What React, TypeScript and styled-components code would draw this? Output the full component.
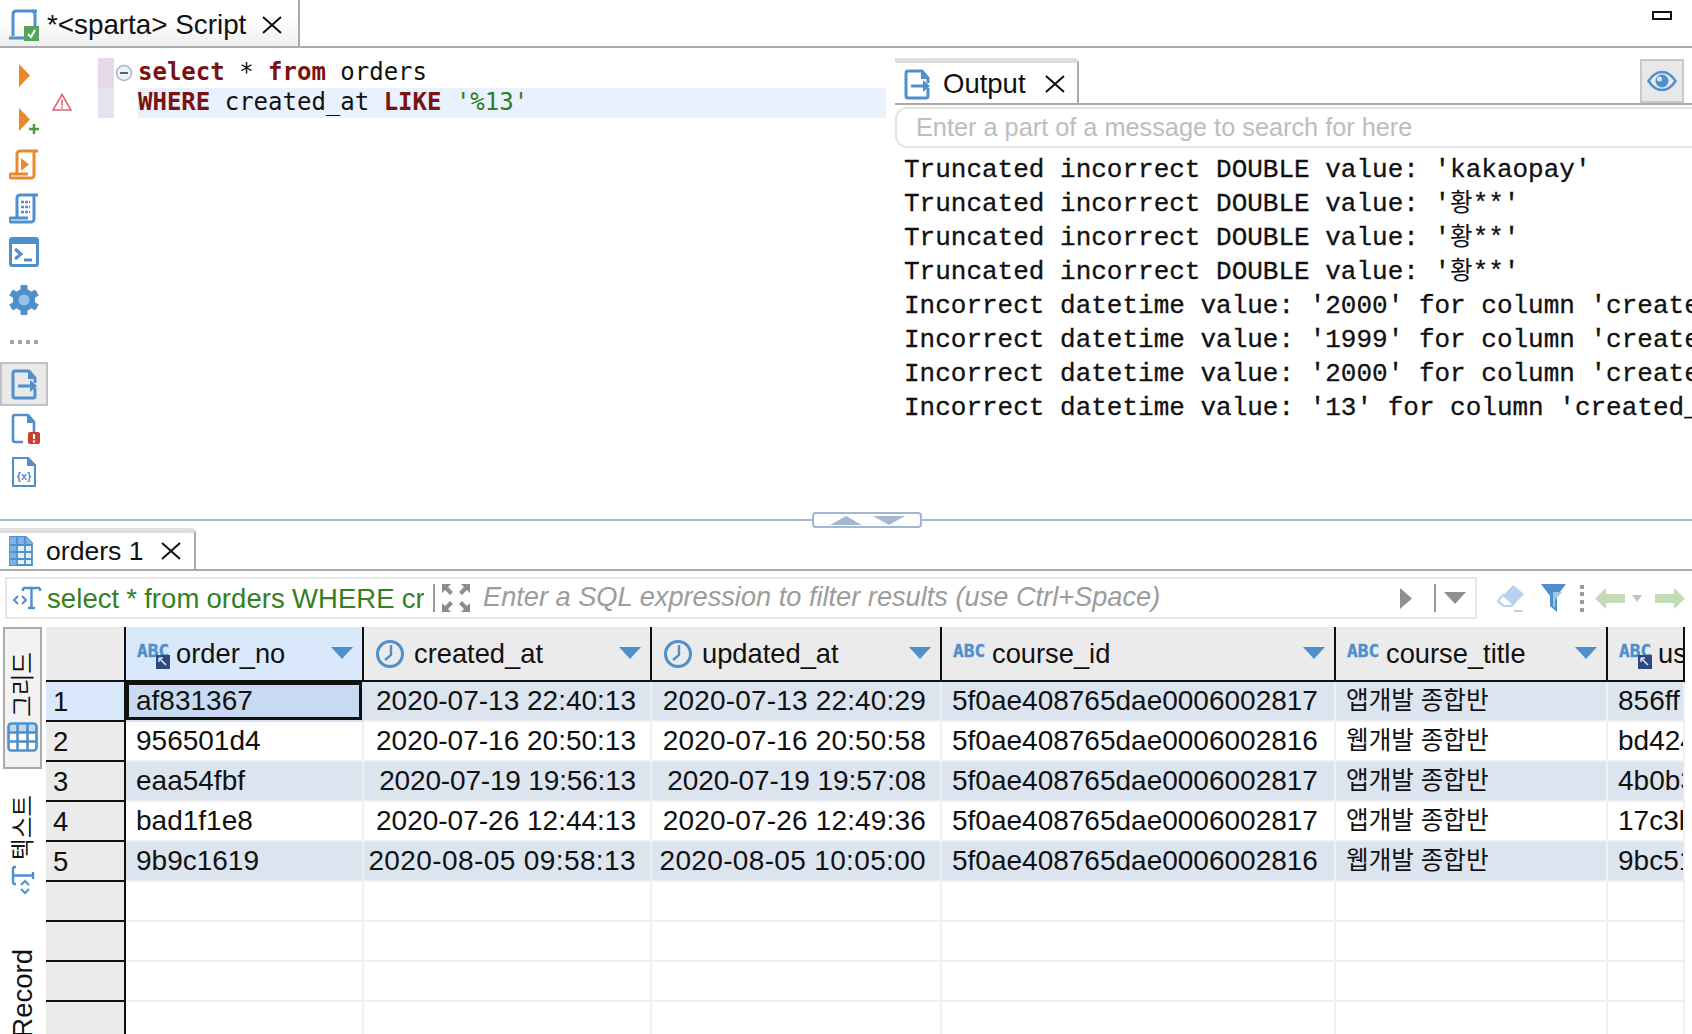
import React from "react";
import styled, { createGlobalStyle } from "styled-components";

const BLUE = "#4f8fcc";
const SANS = `"Liberation Sans", Arial, sans-serif`;
const KO = `"Liberation Sans", "Noto Sans CJK KR", sans-serif`;
const HAIR = "#aaaaaa";

const Global = createGlobalStyle`
  html, body { margin: 0; padding: 0; background: #fff; overflow: hidden; }
  #root { width: 1692px; height: 1034px; overflow: hidden; }
`;

const Page = styled.div`
  width: 1692px; height: 1034px; overflow: hidden; display: flex; flex-direction: column;
  font-family: ${SANS}; color: #111; background: #fff;
`;

/* top tab bar */
const TopBar = styled.div`
  height: 48px; box-sizing: border-box; flex: none; display: flex; align-items: stretch; justify-content: space-between;
  border-bottom: 2px solid ${HAIR};
`;
const ScriptTab = styled.div`
  width: 300px; box-sizing: border-box; display: flex; align-items: center; padding: 3px 16px 0 8px;
  border-right: 2px solid ${HAIR};
  background: linear-gradient(#ffffff 40%, #efefef);
`;
const TabLabel = styled.span<{ $left: number; $size?: number }>`
  font-size: ${(p) => p.$size ?? 27.5}px; margin-left: ${(p) => p.$left}px; white-space: nowrap; flex: 1;
`;
const MinButton = styled.div`
  width: 20px; height: 9px; box-sizing: border-box; border: 2px solid #111; margin: 11px 20px 0 0;
`;

/* main */
const Main = styled.div`
  height: 464px; flex: none; display: flex;
`;
const ToolColumn = styled.div`
  width: 48px; flex: none; display: flex; flex-direction: column; padding-top: 1px;
`;
const Tool = styled.div<{ $h: number; $active?: boolean }>`
  height: ${(p) => p.$h}px; box-sizing: border-box; display: flex; align-items: center; justify-content: center;
  ${(p) => p.$active && `background:#e9e9e9;border:2px solid #c2c2c2;`}
`;
const Editor = styled.div`
  width: 838px; flex: none; padding-top: 10px;
`;
const CodeRow = styled.div`
  display: flex; height: 30px;
`;
const RulerCell = styled.div`
  width: 50px; flex: none; display: flex; align-items: center; justify-content: center;
`;
const MarkCell = styled.div<{ $color: string }>`
  width: 16px; flex: none; background: ${(p) => p.$color};
`;
const FoldCell = styled.div`
  width: 24px; flex: none; display: flex; align-items: center; padding-left: 1px; box-sizing: border-box;
`;
const Code = styled.div<{ $current?: boolean }>`
  flex: 1; font: 24px/28px "DejaVu Sans Mono", monospace; white-space: pre; color: #111;
  background: ${(p) => (p.$current ? "#e8f1fd" : "transparent")};
`;
const Kw = styled.span`
  color: #7a1212; font-weight: 700;
`;
const Str = styled.span`
  color: #2f7d22;
`;

const OutputPane = styled.div`
  flex: 1; min-width: 0; padding: 10px 0 0 9px; display: flex; flex-direction: column;
`;
const OutHead = styled.div`
  height: 47px; flex: none; display: flex; justify-content: space-between; box-sizing: border-box;
  border-bottom: 2px solid ${HAIR};
`;
const OutTab = styled.div`
  width: 184px; height: 47px; box-sizing: border-box; display: flex; align-items: center; padding: 0 12px 0 9px; flex: none;
  border-right: 2px solid ${HAIR}; border-top: 5px solid #dedede; border-top-right-radius: 5px;
`;
const EyeButton = styled.div`
  width: 44px; height: 44px; margin: 1px 8px 0 0; box-sizing: border-box; background: #e8e8e8;
  border: 2px solid #c8c8c8; display: flex; align-items: center; justify-content: center;
`;
const OutSearch = styled.div`
  height: 41px; flex: none; margin-top: 2px; box-sizing: border-box; border: 2px solid #e4e4e4; border-right: 0;
  border-radius: 12px 0 0 12px; display: flex; align-items: center; padding-left: 19px;
  font-size: 25.3px; color: #bdbdbd; white-space: nowrap; overflow: hidden;
`;
const OutLines = styled.div`
  padding: 5px 0 0 9px; font: 26px/34px "Liberation Mono", "Courier New", monospace; color: #111;
  white-space: pre; overflow: hidden; -webkit-text-stroke: 0.3px #111;
`;
const OutLine = styled.div`
  height: 34px;
`;
const OutKo = styled.span`
  font-family: "Noto Sans CJK KR", sans-serif; font-size: 24.5px; line-height: 1; -webkit-text-stroke: 0;
`;

/* sash */
const Sash = styled.div`
  height: 16px; flex: none; display: flex; align-items: center;
`;
const SashLine = styled.div<{ $w?: number }>`
  height: 2px; background: #a3b7d3;
  ${(p) => (p.$w ? `width:${p.$w}px;flex:none;` : `flex:1;`)}
`;
const SashGrip = styled.div`
  width: 110px; height: 16px; box-sizing: border-box; border: 2px solid #a3b7d3; border-radius: 4px; flex: none;
  display: flex; align-items: center; justify-content: center; gap: 11px;
`;

/* results */
const ResultTabs = styled.div`
  height: 43px; flex: none; box-sizing: border-box; border-bottom: 2px solid ${HAIR};
`;
const ResultTab = styled.div`
  width: 196px; height: 43px; box-sizing: border-box; border-top: 5px solid #dedede; border-right: 2px solid ${HAIR};
  border-top-right-radius: 5px; display: flex; align-items: center; padding: 0 0 2px 9px;
`;
const FilterRow = styled.div`
  height: 42px; flex: none; margin: 6px 0 8px 5px; display: flex; align-items: center;
`;
const FilterBox = styled.div`
  width: 1472px; height: 42px; flex: none; box-sizing: border-box; border: 2px solid #e6e6e6; display: flex; align-items: center; padding-left: 5px;
`;
const QueryText = styled.div`
  width: 377px; margin-left: 5px; flex: none; overflow: hidden; white-space: nowrap; font-size: 27.5px; color: #35801f;
  word-spacing: -0.7px; letter-spacing: 0.08px; padding-top: 2px;
`;
const VBar = styled.div`
  width: 2px; height: 28px; background: #999; flex: none;
`;
const FilterHint = styled.div`
  flex: 1; font-style: italic; font-size: 27.2px; color: #9c9c9c; white-space: nowrap; margin-left: 12px; margin-bottom: 2px;
`;
const FilterActions = styled.div`
  display: flex; align-items: center; margin-left: 18px;
`;
const Spacer = styled.span<{ $w: number }>`
  width: ${(p) => p.$w}px; flex: none; display: inline-block;
`;

const Content = styled.div`
  flex: 1; min-height: 0; display: flex; overflow: hidden;
`;
const VStrip = styled.div`
  width: 39px; margin: 0 4px 0 3px; flex: none; display: flex; flex-direction: column; align-items: center;
`;
const VTab = styled.div<{ $active?: boolean; $h: number; $pt: number }>`
  width: 39px; height: ${(p) => p.$h}px; box-sizing: border-box; flex: none; padding-top: ${(p) => p.$pt}px;
  display: flex; flex-direction: column; align-items: center; gap: 5px;
  ${(p) => p.$active && `border:2px solid ${HAIR};background:#f2f2f2;`}
`;
const VLabel = styled.span<{ $size: number }>`
  writing-mode: vertical-rl; text-orientation: sideways; transform: rotate(180deg); font-family: ${KO};
  font-size: ${(p) => p.$size}px; line-height: 30px; white-space: nowrap; color: #111;
`;

const Grid = styled.div`
  display: grid; grid-template-columns: 80px 238px 288px 290px 394px 272px 77px; grid-auto-rows: 40px; flex: none;
  grid-template-rows: 55px;
`;
const HeadCorner = styled.div`
  background: #ebebeb; border-bottom: 2px solid #111; border-right: 2px solid #111; box-sizing: border-box;
`;
const Head = styled.div<{ $sel?: boolean }>`
  background: ${(p) => (p.$sel ? "#d9e9fb" : "#ebebeb")}; border-bottom: 2px solid #111; border-right: 2px solid #111; box-sizing: border-box;
  display: flex; align-items: center; font-size: 27.3px; padding: 1px 9px 0 11px; overflow: hidden;
  white-space: nowrap;
`;
const HeadText = styled.span<{ $gap?: number }>`
  flex: 1; margin-left: ${(p) => p.$gap ?? 5}px; min-width: 0;
`;
const TypeIcon = styled.span`
  width: 34px; height: 30px; flex: none; position: relative; display: flex; align-items: center;
`;
const TypeAbc = styled.span`
  font: 700 17.8px/18px "DejaVu Sans Mono", monospace; color: ${BLUE}; margin-top: -6px; -webkit-text-stroke: 0.4px ${BLUE};
`;
const KeyBadge = styled.span`
  position: absolute; right: 1px; bottom: 0; width: 14px; height: 14px; background: #2f4a80;
  display: flex; align-items: center; justify-content: center;
`;
const RowNum = styled.div<{ $sel?: boolean }>`
  background: ${(p) => (p.$sel ? "#d9e9fb" : "#ebebeb")}; border-bottom: 2px solid #111; border-right: 2px solid #111; box-sizing: border-box;
  font-size: 27.5px; line-height: 40px; padding-left: 7px;
`;
const Cell = styled.div<{ $alt?: boolean; $right?: boolean; $track?: number; $ko?: boolean; $sel?: boolean }>`
  background: ${(p) => (p.$sel ? "#c8daf2" : p.$alt ? "#dce4f0" : "#fff")};
  border-bottom: 2px solid #f0f0f0; border-right: 2px solid #f0f0f0; box-sizing: border-box; overflow: hidden; white-space: nowrap;
  font-family: ${(p) => (p.$ko ? KO : SANS)}; font-size: ${(p) => (p.$ko ? 24.6 : 28)}px; line-height: 37px;
  padding: 0 ${(p) => (p.$right ? 14 : 0)}px 0 ${(p) => (p.$right ? 0 : 10)}px;
  text-align: ${(p) => (p.$right ? "right" : "left")};
  letter-spacing: ${(p) => p.$track ?? 0}px;
  ${(p) => p.$sel && `box-shadow: inset 0 0 0 3px #111; border-color: #d6e2f1;`}
`;

/* icons */
const Scroll = ({ c, children }: { c: string; children?: React.ReactNode }) => (
  <svg width="30" height="31" viewBox="0 0 30 31" fill="none" stroke={c} strokeWidth="3">
    <path d="M29 2H11a3 3 0 0 0-3 3v19" />
    <path d="M25 3v23a3 3 0 0 1-3 3H3a2 2 0 0 1-1-4h17" />
    {children}
  </svg>
);
const X = () => (
  <svg width="20" height="18" viewBox="0 0 20 18" stroke="#111" strokeWidth="2" style={{ flex: "none" }}>
    <path d="M1 1l18 16M19 1L1 17" />
  </svg>
);
const Play = ({ plus }: { plus?: boolean }) => (
  <svg width="24" height="30" viewBox="0 0 24 30" style={{ marginLeft: 8, marginTop: 6 }}>
    <path d="M3 1l11 11.5L3 24z" fill="#e88a2c" />
    {plus && <path d="M18 17v10M13 22h10" stroke="#4e9a3c" strokeWidth="2.5" />}
  </svg>
);
const OutIcon = ({ h = 31 }: { h?: number }) => (
  <svg width="26" height={h} viewBox="0 0 26 31" fill="none" stroke={BLUE} strokeWidth="3" style={{ flex: "none" }}>
    <path d="M24 19v8a2 2 0 0 1-2 2H4a2 2 0 0 1-2-2V4a2 2 0 0 1 2-2h14l6 7v5" />
    <path d="M17 2v8h7z" fill={BLUE} stroke="none" />
    <path d="M7 17h14" />
    <path d="M19 11l7 6-7 6z" fill={BLUE} stroke="none" />
  </svg>
);
const Gear = () => (
  <svg width="30" height="30" viewBox="0 0 30 30">
    {[0, 60, 120, 180, 240, 300].map((a) => (
      <rect key={a} x="11.5" y="0" width="7" height="8" rx="1" fill={BLUE} transform={`rotate(${a} 15 15)`} />
    ))}
    <circle cx="15" cy="15" r="11" fill={BLUE} />
    <circle cx="15" cy="15" r="5.5" fill="#93c3ea" />
  </svg>
);
const Clock = () => (
  <svg width="30" height="30" viewBox="0 0 30 30" fill="none" stroke={BLUE} strokeWidth="3" style={{ flex: "none" }}>
    <circle cx="15" cy="15" r="12.5" />
    <path d="M16 6v10l-6 5" strokeWidth="2.4" />
  </svg>
);
const Sort = () => (
  <svg width="22" height="12" viewBox="0 0 22 12" style={{ flex: "none", marginBottom: 2 }}>
    <path d="M0 0h22L11 12z" fill={BLUE} />
  </svg>
);
const Abc = ({ badge }: { badge?: boolean }) => (
  <TypeIcon>
    <TypeAbc>ABC</TypeAbc>
    {badge && (
      <KeyBadge>
        <svg width="10" height="10" viewBox="0 0 10 10" fill="none" stroke="#dfe8f5" strokeWidth="1.5">
          <path d="M1 1h4M1 1v4M2 2l6 6" />
        </svg>
      </KeyBadge>
    )}
  </TypeIcon>
);
const GridIcon = () => (
  <svg width="31" height="30" viewBox="0 0 31 30" fill="none" stroke={BLUE} strokeWidth="2.6" style={{ flex: "none" }}>
    <rect x="1.5" y="1.5" width="28" height="27" rx="3" fill="#fff" />
    <path d="M1.5 10.5h28M1.5 19.5h28M10.5 1.5v27M20.5 1.5v27" />
    <path d="M1.5 1.5h28v9h-28z" fill={BLUE} opacity=".35" stroke="none" />
  </svg>
);
const TextIcon = ({ vertical }: { vertical?: boolean }) => (
  <svg width="30" height="30" viewBox="0 0 30 30" fill="none" stroke={BLUE} strokeWidth="2.4" style={{ flex: "none" }}>
    <g transform={vertical ? "rotate(-90 15 15)" : undefined}>
      <path d="M11 5h17M19.5 5v20M16 25h7M11 5v3M28 5v3" />
      <path d="M6 13l-4 4 4 4M10 13l4 4-4 4" strokeWidth="2" />
    </g>
  </svg>
);

const rows = [
  { id: "af831367", c: "2020-07-13 22:40:13", u: "2020-07-13 22:40:29", cid: "5f0ae408765dae0006002817", t: "앱개발 종합반", us: "856ff", tc: 0, tu: 0.17 },
  { id: "956501d4", c: "2020-07-16 20:50:13", u: "2020-07-16 20:50:58", cid: "5f0ae408765dae0006002816", t: "웹개발 종합반", us: "bd424", tc: 0, tu: 0.17 },
  { id: "eaa54fbf", c: "2020-07-19 19:56:13", u: "2020-07-19 19:57:08", cid: "5f0ae408765dae0006002817", t: "앱개발 종합반", us: "4b0b3", tc: -0.17, tu: -0.06 },
  { id: "bad1f1e8", c: "2020-07-26 12:44:13", u: "2020-07-26 12:49:36", cid: "5f0ae408765dae0006002817", t: "앱개발 종합반", us: "17c3b", tc: 0, tu: 0.17 },
  { id: "9b9c1619", c: "2020-08-05 09:58:13", u: "2020-08-05 10:05:00", cid: "5f0ae408765dae0006002816", t: "웹개발 종합반", us: "9bc51", tc: 0.4, tu: 0.34 },
];

const outLines: React.ReactNode[] = [
  "Truncated incorrect DOUBLE value: 'kakaopay'",
  <>Truncated incorrect DOUBLE value: '<OutKo>황</OutKo>**'</>,
  <>Truncated incorrect DOUBLE value: '<OutKo>황</OutKo>**'</>,
  <>Truncated incorrect DOUBLE value: '<OutKo>황</OutKo>**'</>,
  "Incorrect datetime value: '2000' for column 'created_at' at row 1",
  "Incorrect datetime value: '1999' for column 'created_at' at row 1",
  "Incorrect datetime value: '2000' for column 'created_at' at row 1",
  "Incorrect datetime value: '13' for column 'created_at' at row 1",
];

export default function App() {
  return (
    <Page>
      <Global />
      <TopBar>
        <ScriptTab>
          <svg width="31" height="32" viewBox="0 0 31 32" fill="none" stroke={BLUE} strokeWidth="3" style={{ flex: "none" }}>
            <path d="M29 2H8a3 3 0 0 0-3 3v22" />
            <path d="M1 29h23" />
            <path d="M24 2a3 3 0 0 1 3 3v16" />
            <rect x="16" y="17" width="15" height="15" fill="#56a15c" stroke="none" />
            <path d="M20 25l3 3 4-7" stroke="#fff" strokeWidth="2" />
          </svg>
          <TabLabel $left={8} $size={27.8}>*&lt;sparta&gt; Script</TabLabel>
          <X />
        </ScriptTab>
        <MinButton />
      </TopBar>
      <Main>
        <ToolColumn>
          <Tool $h={51}><Play /></Tool>
          <Tool $h={38}><Play plus /></Tool>
          <Tool $h={52}>
            <Scroll c="#e88a2c"><path d="M12 9l8 6.5-8 6.5z" fill="#e88a2c" stroke="none" /></Scroll>
          </Tool>
          <Tool $h={36}>
            <Scroll c={BLUE}><path d="M12 9h9M12 14h9M12 19h9" strokeWidth="2.5" strokeDasharray="3 1" /></Scroll>
          </Tool>
          <Tool $h={52}>
            <svg width="30" height="30" viewBox="0 0 30 30" fill="none" stroke={BLUE} strokeWidth="3">
              <rect x="1.5" y="1.5" width="27" height="27" rx="2" />
              <path d="M1.5 2h27v5h-27z" fill={BLUE} stroke="none" />
              <path d="M6 12l6 5-6 5M15 23h8" />
            </svg>
          </Tool>
          <Tool $h={44}><Gear /></Tool>
          <Tool $h={40}>
            <svg width="30" height="6" viewBox="0 0 30 6" fill="#a9a59e">
              <rect x="1" y="1" width="4" height="4" /><rect x="9" y="1" width="4" height="4" />
              <rect x="17" y="1" width="4" height="4" /><rect x="25" y="1" width="4" height="4" />
            </svg>
          </Tool>
          <Tool $h={44} $active><OutIcon /></Tool>
          <Tool $h={45}>
            <svg width="30" height="32" viewBox="0 0 30 32" fill="none" stroke={BLUE} strokeWidth="2.6" style={{ marginLeft: 4 }}>
              <path d="M12 29H4a2 2 0 0 1-2-2V4a2 2 0 0 1 2-2h13l6 7v10" />
              <path d="M16 2v8h7z" fill={BLUE} stroke="none" />
              <rect x="17" y="19" width="12" height="12" rx="2" fill="#c93f2e" stroke="none" />
              <path d="M23 21v5M23 27.5v2" stroke="#fff" strokeWidth="2.2" />
            </svg>
          </Tool>
          <Tool $h={42}>
            <svg width="24" height="30" viewBox="0 0 24 30" fill="none" stroke={BLUE} strokeWidth="2">
              <path d="M1 1h15l7 7v21H1z" />
              <path d="M15 1v8h8z" fill={BLUE} stroke="none" />
              <text x="12" y="23" fontSize="11" fontWeight="700" textAnchor="middle" fill={BLUE} stroke="none" fontFamily="Liberation Sans">{"{x}"}</text>
            </svg>
          </Tool>
        </ToolColumn>
        <Editor>
          <CodeRow>
            <RulerCell />
            <MarkCell $color="#e8d9ea" />
            <FoldCell>
              <svg width="18" height="18" viewBox="0 0 18 18">
                <circle cx="9" cy="9" r="7.5" fill="#eef1f6" stroke="#a9b6c9" strokeWidth="1.5" />
                <path d="M5 9h8" stroke="#55637a" strokeWidth="2" />
              </svg>
            </FoldCell>
            <Code><Kw>select</Kw> * <Kw>from</Kw> orders</Code>
          </CodeRow>
          <CodeRow>
            <RulerCell>
              <svg width="20" height="18" viewBox="0 0 20 18" fill="none" stroke="#e0636f" strokeWidth="1.6" style={{ marginRight: 23, marginTop: -2 }}>
                <path d="M10 1.5L19 17H1z" />
                <path d="M10 6.5v6M10 13.5v2" />
              </svg>
            </RulerCell>
            <MarkCell $color="#e4e4f0" />
            <FoldCell />
            <Code $current><Kw>WHERE</Kw> created_at <Kw>LIKE</Kw> <Str>'%13'</Str></Code>
          </CodeRow>
        </Editor>
        <OutputPane>
          <OutHead>
            <OutTab>
              <OutIcon />
              <TabLabel $left={13}>Output</TabLabel>
              <X />
            </OutTab>
            <EyeButton>
              <svg width="30" height="24" viewBox="0 0 30 24" fill="none" stroke={BLUE} strokeWidth="2.4">
                <path d="M1.5 12C6 5 10 3 15 3s9 2 13.5 9C24 19 20 21 15 21S6 19 1.5 12z" />
                <circle cx="15" cy="12" r="6.5" fill={BLUE} stroke="none" />
                <circle cx="12.5" cy="10" r="2.5" fill="#d8e8f6" stroke="none" />
              </svg>
            </EyeButton>
          </OutHead>
          <OutSearch>Enter a part of a message to search for here</OutSearch>
          <OutLines>
            {outLines.map((l, i) => (
              <OutLine key={i}>{l}</OutLine>
            ))}
          </OutLines>
        </OutputPane>
      </Main>
      <Sash>
        <SashLine $w={812} />
        <SashGrip>
          <svg width="32" height="9" viewBox="0 0 32 9"><path d="M0 9L16 0l16 9z" fill="#a3b7d3" /></svg>
          <svg width="32" height="9" viewBox="0 0 32 9"><path d="M0 0h32L16 9z" fill="#a3b7d3" /></svg>
        </SashGrip>
        <SashLine />
      </Sash>
      <ResultTabs>
        <ResultTab>
          <svg width="24" height="30" viewBox="0 0 24 30" fill="none" stroke={BLUE} strokeWidth="1.8" style={{ flex: "none" }}>
            <path d="M1 1h16l6 6v22H1z" fill="#e4f0fa" />
            <path d="M1 1h16l6 6v2H1zM1 9h6v20H1z" fill="#7fb2e2" stroke="none" />
            <path d="M1 9h22M1 16h22M1 23h22M8 1v28M16 1v28" />
          </svg>
          <TabLabel $left={13} $size={26.6}>orders 1</TabLabel>
          <span style={{ marginRight: 13, display: "flex" }}><X /></span>
        </ResultTab>
      </ResultTabs>
      <FilterRow>
        <FilterBox>
          <TextIcon />
          <QueryText>select * from orders WHERE created_at LIKE '%13'</QueryText>
          <Spacer $w={9} />
          <VBar />
          <Spacer $w={6} />
          <svg width="30" height="30" viewBox="0 0 30 30" fill="#8c8c8c" style={{ flex: "none" }}>
            <path d="M1 1h9L7 4l5 5-3 3-5-5-3 3zM29 1v9l-3-3-5 5-3-3 5-5-3-3zM1 29v-9l3 3 5-5 3 3-5 5 3 3zM29 29h-9l3-3-5-5 3-3 5 5 3-3z" />
          </svg>
          <FilterHint>Enter a SQL expression to filter results (use Ctrl+Space)</FilterHint>
          <svg width="12" height="21" viewBox="0 0 12 21" style={{ flex: "none" }}><path d="M0 0l12 10.5L0 21z" fill="#8f8f8f" /></svg>
          <Spacer $w={22} />
          <VBar />
          <Spacer $w={8} />
          <svg width="22" height="12" viewBox="0 0 22 12" style={{ flex: "none" }}><path d="M0 0h22L11 12z" fill="#8f8f8f" /></svg>
          <Spacer $w={9} />
        </FilterBox>
        <FilterActions>
          <svg width="30" height="29" viewBox="0 0 30 29" fill="none" style={{ flex: "none" }}>
            <path d="M18 1l11 9-12 13H8l-6-5z" fill="#b7d3ee" />
            <path d="M8 11l10 9-2 2H9l-6-5z" fill="#fff" stroke="#b7d3ee" strokeWidth="2" />
            <path d="M19 27h9" stroke="#b7d3ee" strokeWidth="2" />
          </svg>
          <Spacer $w={16} />
          <svg width="25" height="28" viewBox="0 0 25 28" style={{ flex: "none" }}>
            <path d="M0 0h25l-9 12v16l-7-6V12z" fill={BLUE} />
            <path d="M12 8h9l-7 8v8l-2-2z" fill="#9cc6ec" />
          </svg>
          <Spacer $w={13} />
          <svg width="6" height="28" viewBox="0 0 6 28" fill="#9b9b93" style={{ flex: "none" }}>
            <rect x="1" y="1" width="4" height="4" /><rect x="1" y="8" width="4" height="4" />
            <rect x="1" y="16" width="4" height="4" /><rect x="1" y="24" width="4" height="4" />
          </svg>
          <Spacer $w={10} />
          <svg width="30" height="21" viewBox="0 0 30 21" style={{ flex: "none" }}><path d="M0 10.5L11 0v6h19v9H11v6z" fill="#c3dcb5" /></svg>
          <Spacer $w={7} />
          <svg width="10" height="7" viewBox="0 0 10 7" style={{ flex: "none" }}><path d="M0 0h10L5 7z" fill="#c4c4c4" /></svg>
          <Spacer $w={13} />
          <svg width="30" height="21" viewBox="0 0 30 21" style={{ flex: "none" }}><path d="M30 10.5L19 0v6H0v9h19v6z" fill="#c3dcb5" /></svg>
        </FilterActions>
      </FilterRow>
      <Content>
        <VStrip>
          <VTab $active $h={142} $pt={23}>
            <VLabel $size={23.5}>그리드</VLabel>
            <GridIcon />
          </VTab>
          <VTab $h={180} $pt={26}>
            <VLabel $size={23.5}>텍스트</VLabel>
            <TextIcon vertical />
          </VTab>
          <VTab $h={90} $pt={0}>
            <VLabel $size={27.5}>Record</VLabel>
          </VTab>
        </VStrip>
        <Grid>
          <HeadCorner />
          <Head $sel>
            <Abc badge />
            <HeadText>order_no</HeadText>
            <Sort />
          </Head>
          <Head>
            <Clock />
            <HeadText $gap={9}>created_at</HeadText>
            <Sort />
          </Head>
          <Head>
            <Clock />
            <HeadText $gap={9}>updated_at</HeadText>
            <Sort />
          </Head>
          <Head>
            <Abc />
            <HeadText>course_id</HeadText>
            <Sort />
          </Head>
          <Head>
            <Abc />
            <HeadText>course_title</HeadText>
            <Sort />
          </Head>
          <Head>
            <Abc badge />
            <HeadText>user_id</HeadText>
          </Head>
          {rows.map((r, i) => {
            const alt = i % 2 === 0;
            const first = i === 0;
            return (
              <React.Fragment key={r.id}>
                <RowNum $sel={first}>{i + 1}</RowNum>
                <Cell $alt={alt} $sel={first}>{r.id}</Cell>
                <Cell $alt={alt} $right $track={r.tc}>{r.c}</Cell>
                <Cell $alt={alt} $right $track={r.tu}>{r.u}</Cell>
                <Cell $alt={alt}>{r.cid}</Cell>
                <Cell $alt={alt} $ko>{r.t}</Cell>
                <Cell $alt={alt}>{r.us}</Cell>
              </React.Fragment>
            );
          })}
          {[0, 1, 2, 3].map((e) => (
            <React.Fragment key={e}>
              <RowNum />
              <Cell /><Cell /><Cell /><Cell /><Cell /><Cell />
            </React.Fragment>
          ))}
        </Grid>
      </Content>
    </Page>
  );
}
